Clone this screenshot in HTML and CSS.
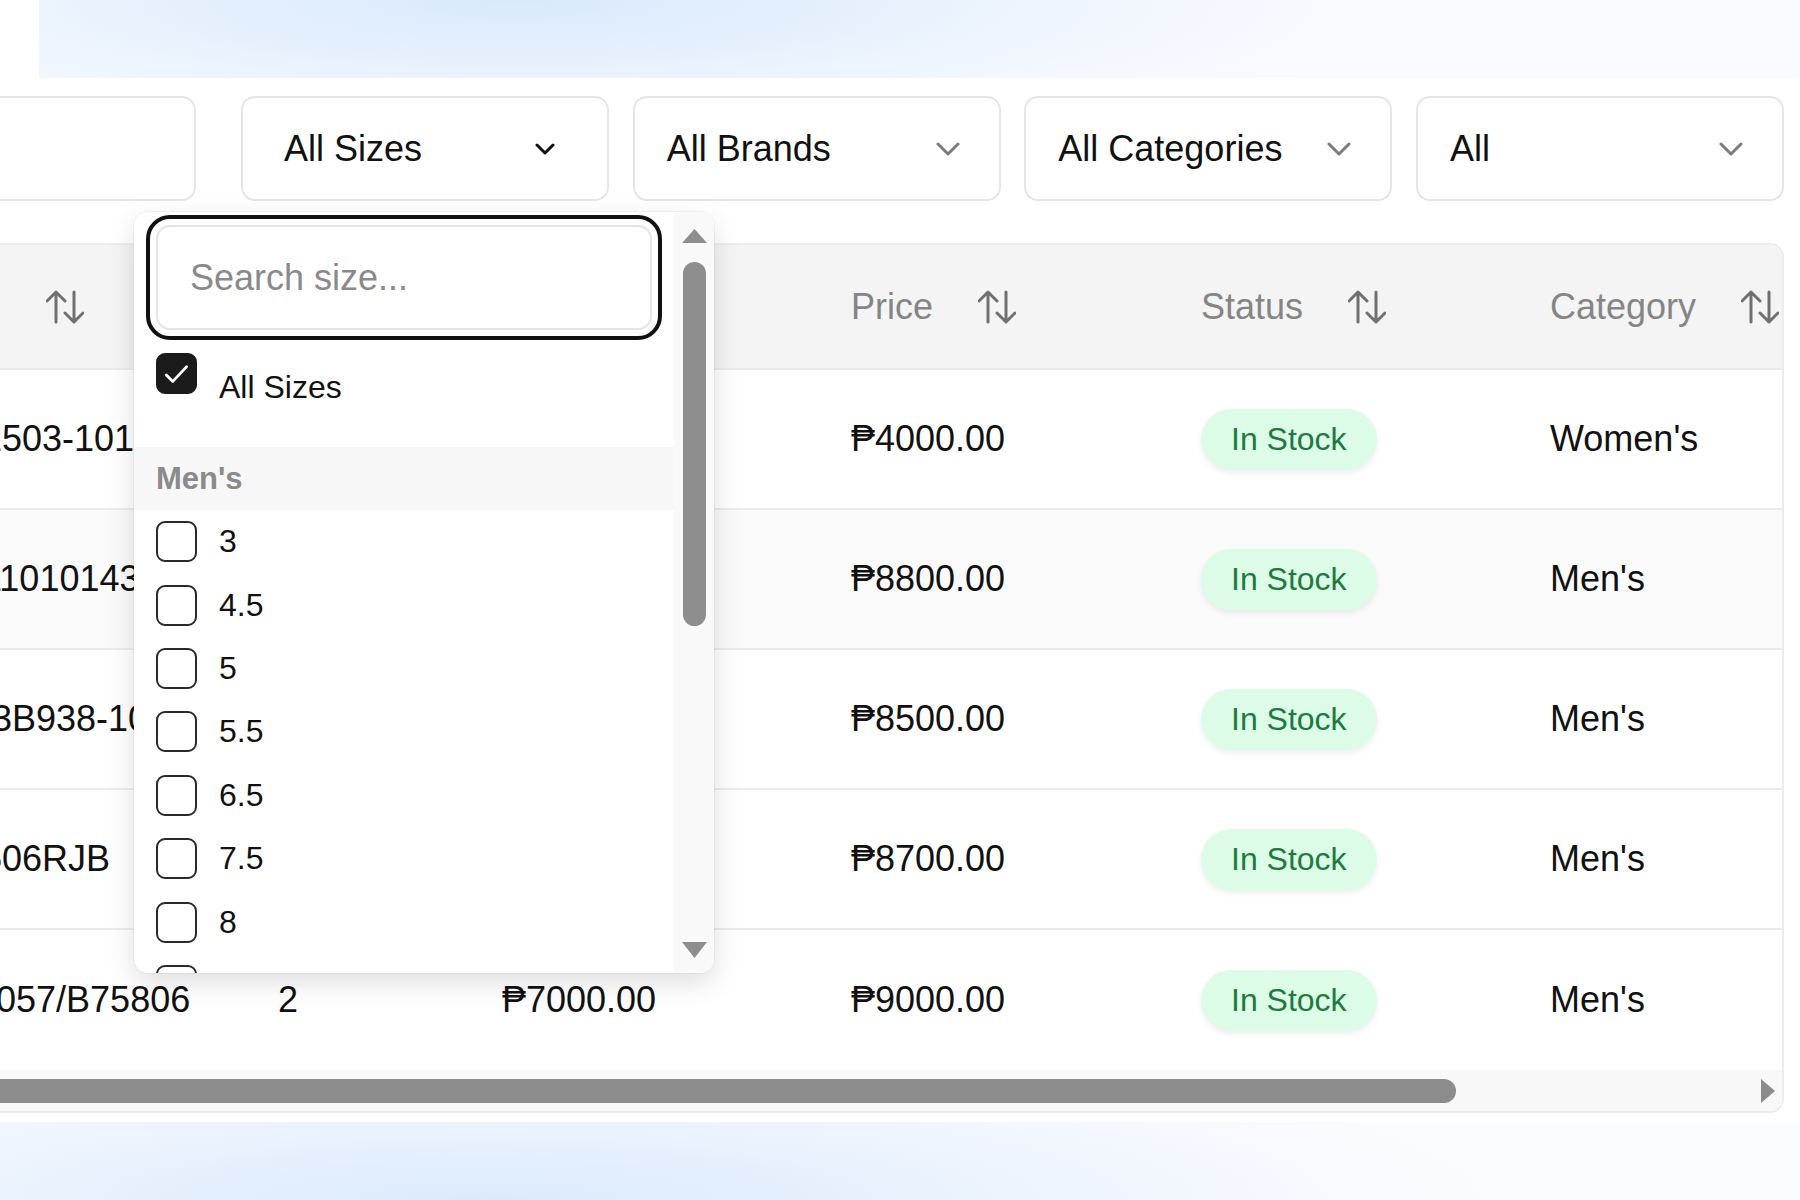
FILE: index.html
```html
<!DOCTYPE html>
<html lang="en">
<head>
<meta charset="utf-8">
<title>Inventory</title>
<link rel="stylesheet" href="styles.css">
</head>
<body>
<div class="page">
  <div class="banner"></div>

  <div class="filters">
    <div class="box search-box"><input class="search-field" type="text" aria-label="Search products"></div>
    <div class="box select size-select">
      <span>All Sizes</span>
      <svg class="chev chev-dark" width="20" height="12" viewBox="0 0 20 12"><path d="M2 2l8 8 8-8"/></svg>
    </div>
    <div class="box select">
      <span>All Brands</span>
      <svg class="chev" width="24" height="14" viewBox="0 0 24 14"><path d="M2 2l10 10 10-10"/></svg>
    </div>
    <div class="box select">
      <span>All Categories</span>
      <svg class="chev" width="24" height="14" viewBox="0 0 24 14"><path d="M2 2l10 10 10-10"/></svg>
    </div>
    <div class="box select">
      <span>All</span>
      <svg class="chev" width="24" height="14" viewBox="0 0 24 14"><path d="M2 2l10 10 10-10"/></svg>
    </div>
  </div>

  <div class="card">
    <div class="row head">
      <div class="th th-first"><span>SKU</span><svg class="sort" width="38" height="34" viewBox="0 0 38 34"><path d="M10 32V2M1 11l9-9 9 9"/><path d="M28 2v30M19 23l9 9 9-9"/></svg></div>
      <div class="th"><span>Qty</span><svg class="sort" width="38" height="34" viewBox="0 0 38 34"><path d="M10 32V2M1 11l9-9 9 9"/><path d="M28 2v30M19 23l9 9 9-9"/></svg></div>
      <div class="th"><span>Cost</span><svg class="sort" width="38" height="34" viewBox="0 0 38 34"><path d="M10 32V2M1 11l9-9 9 9"/><path d="M28 2v30M19 23l9 9 9-9"/></svg></div>
      <div class="th"><span>Price</span><svg class="sort" width="38" height="34" viewBox="0 0 38 34"><path d="M10 32V2M1 11l9-9 9 9"/><path d="M28 2v30M19 23l9 9 9-9"/></svg></div>
      <div class="th"><span>Status</span><svg class="sort" width="38" height="34" viewBox="0 0 38 34"><path d="M10 32V2M1 11l9-9 9 9"/><path d="M28 2v30M19 23l9 9 9-9"/></svg></div>
      <div class="th"><span>Category</span><svg class="sort" width="38" height="34" viewBox="0 0 38 34"><path d="M10 32V2M1 11l9-9 9 9"/><path d="M28 2v30M19 23l9 9 9-9"/></svg></div>
    </div>

    <div class="row">
      <div class="td">DD1503-101</div>
      <div class="td">4</div>
      <div class="td">₱3200.00</div>
      <div class="td">₱4000.00</div>
      <div class="td"><span class="badge">In Stock</span></div>
      <div class="td">Women's</div>
    </div>
    <div class="row alt">
      <div class="td">DD11010143</div>
      <div class="td">3</div>
      <div class="td">₱7000.00</div>
      <div class="td">₱8800.00</div>
      <div class="td"><span class="badge">In Stock</span></div>
      <div class="td">Men's</div>
    </div>
    <div class="row">
      <div class="td">GW3B938-100</div>
      <div class="td">5</div>
      <div class="td">₱6800.00</div>
      <div class="td">₱8500.00</div>
      <div class="td"><span class="badge">In Stock</span></div>
      <div class="td">Men's</div>
    </div>
    <div class="row">
      <div class="td">DD506RJB</div>
      <div class="td">2</div>
      <div class="td">₱6900.00</div>
      <div class="td">₱8700.00</div>
      <div class="td"><span class="badge">In Stock</span></div>
      <div class="td">Men's</div>
    </div>
    <div class="row last">
      <div class="td">FY2057/B75806</div>
      <div class="td">2</div>
      <div class="td">₱7000.00</div>
      <div class="td">₱9000.00</div>
      <div class="td"><span class="badge">In Stock</span></div>
      <div class="td">Men's</div>
    </div>

    <div class="hscroll">
      <div class="hthumb"></div>
      <svg class="harrow" width="16" height="26" viewBox="0 0 16 26"><path d="M1 1l14 12L1 25z"/></svg>
    </div>
  </div>

  <div class="glow"></div>

  <div class="popup">
    <div class="popup-body">
      <div class="search-wrap">
        <input class="size-search" type="text" placeholder="Search size...">
      </div>
      <label class="all-row">
        <span class="cb checked"><svg width="40" height="40" viewBox="0 0 40 40"><path d="M9 21l7 7 15-16"/></svg></span>
        <span class="all-label">All Sizes</span>
      </label>
      <div class="group">Men's</div>
      <label class="item"><span class="cb"></span><span>3</span></label>
      <label class="item"><span class="cb"></span><span>4.5</span></label>
      <label class="item"><span class="cb"></span><span>5</span></label>
      <label class="item"><span class="cb"></span><span>5.5</span></label>
      <label class="item"><span class="cb"></span><span>6.5</span></label>
      <label class="item"><span class="cb"></span><span>7.5</span></label>
      <label class="item"><span class="cb"></span><span>8</span></label>
      <label class="item"><span class="cb"></span><span>8.5</span></label>
    </div>
    <div class="vscroll">
      <svg class="varrow" width="27" height="16" viewBox="0 0 27 16"><path d="M13.5 1L26 15H1z"/></svg>
      <div class="vthumb"></div>
      <div class="vspace"></div>
      <svg class="varrow" width="27" height="18" viewBox="0 0 27 18"><path d="M1 1h25L13.5 17z"/></svg>
    </div>
  </div>
</div>
</body>
</html>
```

FILE: styles.css
```css
* {
  box-sizing: border-box;
}

html, body {
  margin: 0;
  padding: 0;
}

body {
  width: 1800px;
  height: 1200px;
  overflow: hidden;
  background: #ffffff;
  font-family: "Liberation Sans", Arial, sans-serif;
  color: #111111;
}

.page {
  position: relative;
  width: 1800px;
  height: 1200px;
}

.banner {
  margin-left: 39px;
  height: 78px;
  background: radial-gradient(ellipse 900px 160px at 27% 0%, #d9e9fc 0%, #e7f1fd 40%, #f4f8fe 75%, #f8fbff 100%);
}

/* Filters */
.filters {
  display: flex;
  gap: 23.67px;
  margin-top: 18px;
  margin-left: -204px;
  height: 105px;
}

.box {
  flex: 0 0 368px;
  height: 105px;
  border: 2px solid #e6e6e6;
  border-radius: 14px;
  background: #ffffff;
}

.search-box {
  flex-basis: 400px;
  margin-right: 21.33px;
  overflow: hidden;
}

.search-field {
  width: 100%;
  height: 100%;
  border: none;
  outline: none;
  background: transparent;
  font: inherit;
}

.select {
  display: flex;
  align-items: center;
  justify-content: space-between;
  padding: 0 39px 0 32px;
  font-size: 36px;
  color: #111111;
}

.size-select {
  padding: 0 52px 0 41px;
}

.chev {
  fill: none;
  stroke: #7c7c7c;
  stroke-width: 3;
  stroke-linecap: round;
  stroke-linejoin: round;
}

.chev-dark {
  stroke: #111111;
}

/* Table card */
.card {
  margin-top: 42px;
  margin-left: -100px;
  width: 1884px;
  border: 2px solid #ececec;
  border-radius: 14px;
  overflow: hidden;
  background: #ffffff;
}

.row {
  display: grid;
  grid-template-columns: 348px 224px 349px 350px 349px 400px;
  padding-left: 28px;
  height: 140px;
  border-bottom: 2px solid #ebebeb;
  font-size: 36px;
}

.row.head {
  height: 125px;
  background: #f4f4f4;
  color: #858585;
}

.row.alt {
  background: #fafafa;
}

.row.last {
  border-bottom: none;
}

.th {
  display: flex;
  align-items: center;
  gap: 45px;
  white-space: nowrap;
}

.th-first {
  margin-left: -12px;
  gap: 54px;
}

.sort {
  flex: none;
  fill: none;
  stroke: #707070;
  stroke-width: 3;
  stroke-linecap: round;
  stroke-linejoin: round;
}

.td {
  display: flex;
  align-items: center;
  white-space: nowrap;
  color: #111111;
}

.badge {
  display: inline-flex;
  align-items: center;
  height: 61px;
  padding: 0 30px;
  border-radius: 31px;
  background: #dcfce7;
  color: #1d7a3f;
  font-size: 32px;
  box-shadow: 0 3px 6px rgba(0, 0, 0, 0.07);
}

.hscroll {
  display: flex;
  align-items: center;
  height: 41px;
  background: #f8f8f8;
  padding-right: 6px;
}

.hthumb {
  width: 1554px;
  height: 24px;
  border-radius: 12px;
  background: #8c8c8c;
}

.harrow {
  margin-left: auto;
  fill: #8c8c8c;
}

.glow {
  margin-top: 9px;
  height: 80px;
  background: radial-gradient(ellipse 1000px 160px at 27% 100%, #dbeafc 0%, #e8f1fd 40%, #f4f8fe 75%, #fafcff 100%);
}

/* Size popup */
.popup {
  position: absolute;
  left: 134px;
  top: 212px;
  width: 580px;
  height: 761px;
  display: flex;
  background: #ffffff;
  border-radius: 14px;
  overflow: hidden;
  box-shadow: 0 0 0 1px rgba(0, 0, 0, 0.04), 0 10px 28px rgba(0, 0, 0, 0.13);
}

.popup-body {
  flex: 1;
  overflow: hidden;
  padding-top: 13px;
}

.search-wrap {
  padding-left: 22px;
}

.size-search {
  display: block;
  width: 496px;
  height: 105px;
  border: 2px solid #e4e4e4;
  border-radius: 14px;
  padding: 0 0 0 32px;
  font-family: "Liberation Sans", Arial, sans-serif;
  font-size: 36px;
  color: #111111;
  outline: 4px solid #111111;
  outline-offset: 6px;
}

.size-search::placeholder {
  color: #8a8a8a;
}

.all-row {
  display: flex;
  align-items: flex-start;
  gap: 22px;
  height: 117px;
  padding: 23px 0 0 22px;
  font-size: 32px;
}

.all-label {
  line-height: 40px;
  padding-top: 14px;
}

.cb {
  flex: none;
  width: 41px;
  height: 41px;
  border: 2.5px solid #2a2a2a;
  border-radius: 9px;
  background: #ffffff;
}

.cb.checked {
  background: #1b1b1b;
  border-color: #1b1b1b;
  display: flex;
  align-items: center;
  justify-content: center;
}

.cb.checked svg {
  fill: none;
  stroke: #ffffff;
  stroke-width: 3;
  stroke-linecap: round;
  stroke-linejoin: round;
}

.group {
  display: flex;
  align-items: center;
  height: 63px;
  padding-left: 22px;
  background: #f7f7f7;
  color: #8a8a8a;
  font-weight: bold;
  font-size: 31px;
}

.item {
  display: flex;
  align-items: center;
  gap: 22px;
  height: 63.4px;
  padding-left: 22px;
  font-size: 32px;
}

.vscroll {
  flex: 0 0 40px;
  display: flex;
  flex-direction: column;
  align-items: center;
  padding: 16px 0 14px;
  background: #f9f9f9;
}

.varrow {
  flex: none;
  fill: #8e8e8e;
}

.vthumb {
  margin-top: 18px;
  width: 23px;
  height: 364px;
  border-radius: 12px;
  background: #8e8e8e;
}

.vspace {
  flex: 1;
}
```
